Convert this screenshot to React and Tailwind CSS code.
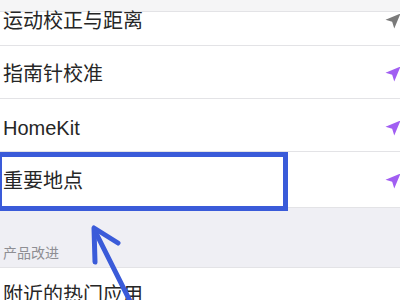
import React from 'react';

const LocationArrow = ({ color }) => (
  <svg width="20" height="20" viewBox="0 0 24 24" className="shrink-0 -mr-[3px]">
    <path d="M21 3 L3 10.5 L11 13 L13.5 21 Z" fill={color} />
  </svg>
);

const Row = ({ label, color, className = '' }) => (
  <div className={`flex items-center justify-between bg-white border-b border-[#e3e3e6] pl-[3px] ${className}`}>
    <span className="text-[20px] text-[#262626] leading-none">{label}</span>
    <LocationArrow color={color} />
  </div>
);

const App = () => {
  return (
    <div
      className="relative w-[400px] h-[300px] overflow-hidden bg-white"
      style={{ fontFamily: '"Liberation Sans", "Noto Sans CJK SC", sans-serif' }}
    >
      <div className="h-[12px] bg-[#f5f5f6] border-b border-[#e3e3e6]" />
      <Row label="运动校正与距离" color="#7a7a7a" className="h-[34px] pb-[16px]" />
      <Row label="指南针校准" color="#a15ef2" className="h-[53px] pt-[3px]" />
      <Row label="HomeKit" color="#a15ef2" className="h-[53px] pt-[5px]" />
      <Row label="重要地点" color="#a15ef2" className="h-[56px] pt-[2px]" />

      <div className="h-[60px] bg-[#efeff4] border-b border-[#e3e3e6] flex items-end pl-[3px] pb-[7px]">
        <span className="text-[14px] text-[#8e8e93] leading-none">产品改进</span>
      </div>
      <div className="flex items-center h-[53px] pl-[3px] bg-white">
        <span className="text-[20px] text-[#262626] leading-none">附近的热门应用</span>
      </div>

      {/* annotation: highlight box */}
      <div className="absolute left-[-3px] top-[152px] w-[291px] h-[59px] border-[5px] border-[#3a5bd9] pointer-events-none" />

      {/* annotation: pointer arrow */}
      <svg className="absolute left-0 top-0 pointer-events-none" width="400" height="300" viewBox="0 0 400 300">
        <g stroke="#3a5bd9" strokeWidth="5" strokeLinecap="round" strokeLinejoin="round" fill="none">
          <line x1="95" y1="231" x2="132" y2="305" />
          <polyline points="118,243 94,228 95,262" />
        </g>
      </svg>
    </div>
  );
};

export default App;
